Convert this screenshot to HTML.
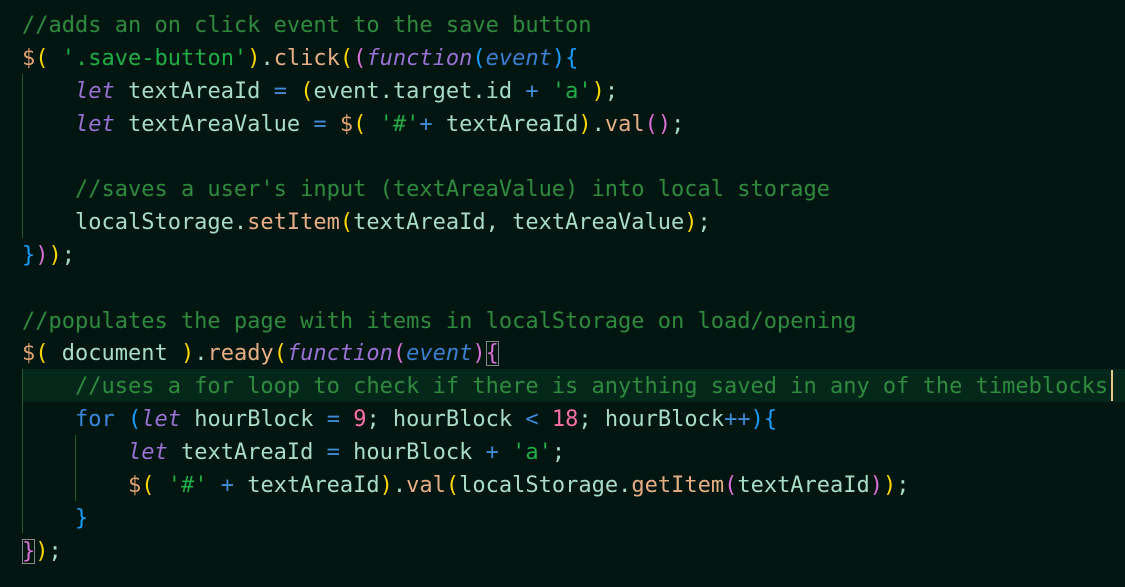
<!DOCTYPE html>
<html><head><meta charset="utf-8"><style>
html,body{margin:0;padding:0;background:#011610;width:1125px;height:587px;overflow:hidden}
.code{position:absolute;left:22px;top:10px;font-family:"DejaVu Sans Mono","Liberation Mono",monospace;font-size:22px;line-height:32.85px;color:#a9dcc6;white-space:pre}
.c{color:#2e8a3f}.s{color:#20ad48}.k{color:#9a70d2;font-style:italic}.f{color:#e7ad84}.d{color:#e0a070}
.y{color:#ffd700}.p{color:#da70d6}.b{color:#179fff}.o{color:#3f8bd8}.n{color:#ff70a8}.kw{color:#3a86d8}.e{color:#3a7fd0;font-style:italic}
.box{outline:1px solid #888;outline-offset:-1px}
.hl{position:absolute;left:22px;top:369px;width:1103px;height:33px;background:#03281a}
.g{position:absolute;width:1px;background:#1f5a2e}
.cur{position:absolute;left:1111px;top:370px;width:2px;height:31px;background:#e8c58a}
</style></head><body>
<div class="hl"></div>
<div class="g" style="left:22px;top:74px;height:164px"></div>
<div class="g" style="left:22px;top:369px;height:164px"></div>
<div class="g" style="left:75px;top:435px;height:66px"></div>
<div class="cur"></div>
<div class="code"><span class="c">//adds an on click event to the save button</span>
<span class="d">$</span><span class="y">(</span> <span class="s">'.save-button'</span><span class="y">)</span>.<span class="f">click</span><span class="y">(</span><span class="p">(</span><span class="k">function</span><span class="b">(</span><span class="e">event</span><span class="b">){</span>
    <span class="k">let</span> textAreaId <span class="o">=</span> <span class="y">(</span>event.target.id <span class="o">+</span> <span class="s">'a'</span><span class="y">)</span>;
    <span class="k">let</span> textAreaValue <span class="o">=</span> <span class="d">$</span><span class="y">(</span> <span class="s">'#'</span><span class="o">+</span> textAreaId<span class="y">)</span>.<span class="f">val</span><span class="p">()</span>;

    <span class="c">//saves a user's input (textAreaValue) into local storage</span>
    localStorage.<span class="f">setItem</span><span class="y">(</span>textAreaId, textAreaValue<span class="y">)</span>;
<span class="b">}</span><span class="p">)</span><span class="y">)</span>;

<span class="c">//populates the page with items in localStorage on load/opening</span>
<span class="d">$</span><span class="y">(</span> document <span class="y">)</span>.<span class="f">ready</span><span class="y">(</span><span class="k">function</span><span class="p">(</span><span class="e">event</span><span class="p">)</span><span class="p box">{</span>
    <span class="c">//uses a for loop to check if there is anything saved in any of the timeblocks</span>
    <span class="kw">for</span> <span class="b">(</span><span class="k">let</span> hourBlock <span class="o">=</span> <span class="n">9</span>; hourBlock <span class="o">&lt;</span> <span class="n">18</span>; hourBlock<span class="o">++</span><span class="b">){</span>
        <span class="k">let</span> textAreaId <span class="o">=</span> hourBlock <span class="o">+</span> <span class="s">'a'</span>;
        <span class="d">$</span><span class="y">(</span> <span class="s">'#'</span> <span class="o">+</span> textAreaId<span class="y">)</span>.<span class="f">val</span><span class="y">(</span>localStorage.<span class="f">getItem</span><span class="p">(</span>textAreaId<span class="p">)</span><span class="y">)</span>;
    <span class="b">}</span>
<span class="p box">}</span><span class="y">)</span>;</div>
</body></html>
